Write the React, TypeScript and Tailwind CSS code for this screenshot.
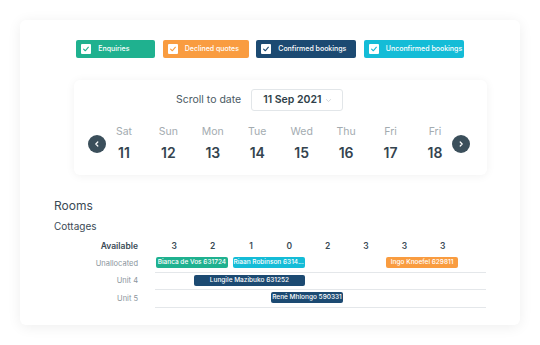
import React from 'react';

const FONT = { fontFamily: '"Inter", "Noto Sans", sans-serif' };

const filters = [
  { label: 'Enquiries', bg: 'bg-[#1fb18f]', check: 'text-[#1fb18f]', w: 'w-[79px]' },
  { label: 'Declined quotes', bg: 'bg-[#f99c40]', check: 'text-[#f99c40]', w: 'w-[86px]' },
  { label: 'Confirmed bookings', bg: 'bg-[#1c4a72]', check: 'text-[#1c4a72]', w: 'w-[100px]' },
  { label: 'Unconfirmed bookings', bg: 'bg-[#14bcd7]', check: 'text-[#14bcd7]', w: 'w-[100px]' },
];

const days = [
  ['Sat', '11'],
  ['Sun', '12'],
  ['Mon', '13'],
  ['Tue', '14'],
  ['Wed', '15'],
  ['Thu', '16'],
  ['Fri', '17'],
  ['Fri', '18'],
];

const available = [3, 2, 1, 0, 2, 3, 3, 3];

type Booking = { name: string; start: string; span: string; bg: string };

const rows: { label: string; bookings: Booking[] }[] = [
  {
    label: 'Unallocated',
    bookings: [
      { name: 'Bianca de Vos 631724', start: 'col-start-1', span: 'col-span-2', bg: 'bg-[#1fb18f]' },
      { name: 'Riaan Robinson 6314...', start: 'col-start-3', span: 'col-span-2', bg: 'bg-[#14bcd7]' },
      { name: 'Ingo Knoefel 629811', start: 'col-start-7', span: 'col-span-2', bg: 'bg-[#f99c40]' },
    ],
  },
  {
    label: 'Unit 4',
    bookings: [{ name: 'Lungile Mazibuko 631252', start: 'col-start-2', span: 'col-span-3', bg: 'bg-[#1c4a72]' }],
  },
  {
    label: 'Unit 5',
    bookings: [{ name: 'René Mhlongo 590331', start: 'col-start-4', span: 'col-span-2', bg: 'bg-[#1c4a72]' }],
  },
];

const CheckBox = ({ color }: { color: string }) => (
  <span className="w-[10px] h-[10px] bg-white rounded-[1px] flex items-center justify-center shrink-0">
    <svg viewBox="0 0 10 10" className={`w-[8px] h-[8px] ${color}`} fill="none" stroke="currentColor" strokeWidth="1.4" strokeLinecap="round" strokeLinejoin="round">
      <path d="M2 5.2 L4.1 7.2 L8 2.8" />
    </svg>
  </span>
);

const Arrow = ({ dir }: { dir: 'left' | 'right' }) => (
  <button className="w-[18px] h-[18px] rounded-full bg-[#3b4f5b] flex items-center justify-center shrink-0">
    <svg viewBox="0 0 10 10" className="w-[8px] h-[8px]" fill="none" stroke="white" strokeWidth="1.5" strokeLinecap="round" strokeLinejoin="round">
      {dir === 'left' ? <path d="M6 2.5 L3.5 5 L6 7.5" /> : <path d="M4 2.5 L6.5 5 L4 7.5" />}
    </svg>
  </button>
);

export default function App() {
  return (
    <div className="w-[540px] h-[345px] bg-white p-5" style={FONT}>
      <div className="w-[500px] h-[305px] bg-white rounded-md shadow-[0_2px_14px_rgba(0,0,0,0.07)] pt-5">
        {/* filters */}
        <div className="flex justify-center gap-[7.5px]">
          {filters.map(f => (
            <div key={f.label} className={`${f.bg} ${f.w} h-[18px] rounded-[2px] flex items-center pl-[5px] gap-[7px]`}>
              <CheckBox color={f.check} />
              <span className="text-white text-[7px] font-medium whitespace-nowrap">{f.label}</span>
            </div>
          ))}
        </div>

        {/* date scroller */}
        <div className="ml-[54px] mt-[22px] w-[413px] h-[95px] bg-white rounded-md shadow-[0_1px_10px_rgba(0,0,0,0.06)] pt-[9px]">
          <div className="flex items-center pl-[102px] gap-[10px]">
            <span className="text-[10.5px] text-[#4a5a64]">Scroll to date</span>
            <div className="w-[92px] h-[22px] border border-[#e2e6e9] rounded-[3px] flex items-center pl-[11px] pr-[10px] justify-between">
              <span className="text-[10.5px] font-semibold text-[#2f3f49]">11 Sep 2021</span>
              <svg viewBox="0 0 10 10" className="w-[7px] h-[7px]" fill="none" stroke="#c3c9cd" strokeWidth="1" strokeLinecap="round">
                <path d="M2 3.5 L5 6.5 L8 3.5" />
              </svg>
            </div>
          </div>
          <div className="flex items-center ml-[14px] mt-[14px]">
            <Arrow dir="left" />
            <div className="flex gap-[8.43px]">
              {days.map(([d, n], i) => (
                <div key={i} className="w-[36px] flex flex-col items-center">
                  <span className="text-[10.5px] text-[#a3abb0] leading-[14px]">{d}</span>
                  <span className="text-[14px] font-semibold text-[#34444f] leading-[18px] mt-[5px]">{n}</span>
                </div>
              ))}
            </div>
            <div className="-ml-[1px]">
              <Arrow dir="right" />
            </div>
          </div>
        </div>

        {/* rooms */}
        <div className="pl-[34px] mt-[23px]">
          <div className="text-[12px] text-[#3a4a55] leading-[16px]">Rooms</div>
          <div className="text-[10px] text-[#3a4a55] mt-[6px] leading-[13px]">Cottages</div>
        </div>

        <div className="mt-[6px]">
          <div className="flex items-center h-[14px]">
            <div className="w-[118px] text-right text-[8.5px] font-semibold text-[#3a4a55]">Available</div>
            <div className="ml-[17px] grid grid-cols-8 w-[307px]">
              {available.map((a, i) => (
                <span key={i} className="text-center text-[8.5px] font-semibold text-[#3a4a55]">{a}</span>
              ))}
            </div>
          </div>
          <div className="mt-[2px]">
            {rows.map(r => (
              <div key={r.label} className="flex h-[17.5px]">
                <div className="w-[118px] text-right text-[7.5px] text-[#8a959c] flex items-center justify-end pb-[1px]">{r.label}</div>
                <div className="ml-[17px] w-[331px] border-b border-[#e4e7ea] pt-[2px]">
                  <div className="grid grid-cols-8 w-[307px]">
                    {r.bookings.map(b => (
                      <div key={b.name} className={`${b.start} ${b.span} ${b.bg} ml-[1px] mr-[4px] h-[11px] rounded-[2px] flex items-center justify-center`}>
                        <span className="text-white text-[6.5px] font-medium whitespace-nowrap leading-none">{b.name}</span>
                      </div>
                    ))}
                  </div>
                </div>
              </div>
            ))}
          </div>
        </div>
      </div>
    </div>
  );
}
